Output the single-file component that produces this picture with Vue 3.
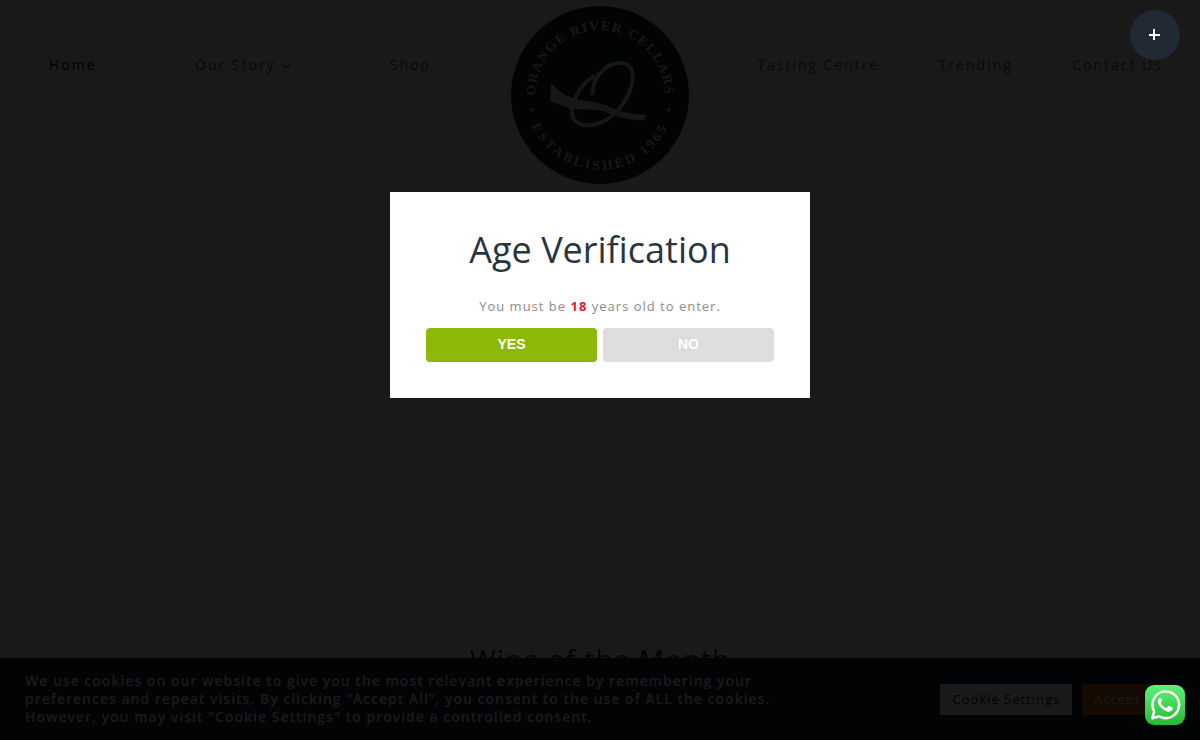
<script setup>
const leftLinks = [
    { label: 'Home', active: true },
    { label: 'Our Story', dropdown: true },
    { label: 'Shop' }
]

const rightLinks = [
    { label: 'Tasting Centre' },
    { label: 'Trending' },
    { label: 'Contact Us' }
]
</script>

<template>
    <div class="page">
        <header class="header">
            <nav class="nav nav--left" aria-label="Main">
                <a
                    v-for="link in leftLinks"
                    :key="link.label"
                    href="#"
                    class="nav__link"
                    :class="{ 'nav__link--active': link.active }"
                >
                    {{ link.label }}
                    <svg v-if="link.dropdown" class="nav__chevron" viewBox="0 0 10 6" aria-hidden="true">
                        <path d="M1 1l4 4 4-4" fill="none" stroke="currentColor" stroke-width="1.2" />
                    </svg>
                </a>
            </nav>

            <a href="#" class="logo" aria-label="Orange River Cellars">
                <svg class="logo__svg" viewBox="33 18 534 534">
                    <defs>
                        <path id="arc-top" d="M106 300V285A194 194 0 0 1 494 285V300" />
                        <path id="arc-bottom" d="M76 285A224 224 0 0 0 524 285" />
                    </defs>
                    <circle cx="300" cy="285" r="267" fill="#141e28" />
                    <g class="logo__text">
                        <text><textPath href="#arc-top" startOffset="50%">ORANGE RIVER CELLARS</textPath></text>
                        <text class="logo__year"><textPath href="#arc-bottom" startOffset="50%">ESTABLISHED 1965</textPath></text>
                    </g>
                    <g class="logo__mark">
                        <circle cx="95" cy="330" r="5" />
                        <circle cx="506" cy="330" r="5" />
                        <path d="M153 250C178 275 200 291 232 299C275 305 300 307 330 321C365 337 400 343 438 345L432 362C390 359 350 351 315 335C285 325 250 331 210 326C188 320 170 308 151 304Z" />
                        <path
                            class="logo__loop"
                            d="M279 285C273 262 288 228 313 207C344 182 384 184 395 210C408 250 380 308 338 346C300 380 238 388 219 354C206 320 236 254 284 227"
                        />
                    </g>
                </svg>
            </a>

            <nav class="nav nav--right" aria-label="Secondary">
                <a v-for="link in rightLinks" :key="link.label" href="#" class="nav__link">{{ link.label }}</a>
            </nav>
        </header>

        <main class="content">
            <h2 class="content__title">Wine of the Month</h2>
        </main>

        <section class="cookies" aria-label="Cookie notice">
            <p class="cookies__text">
                We use cookies on our website to give you the most relevant experience by remembering your
                preferences and repeat visits. By clicking “Accept All”, you consent to the use of ALL the cookies.
                However, you may visit "Cookie Settings" to provide a controlled consent.
            </p>
            <div class="cookies__actions">
                <button type="button" class="cookies__btn">Cookie Settings</button>
                <button type="button" class="cookies__btn cookies__btn--accept">Accept All</button>
            </div>
        </section>

        <div class="overlay">
            <div class="dialog" role="dialog" aria-modal="true" aria-labelledby="age-title">
                <h1 id="age-title" class="dialog__title">Age Verification</h1>
                <p class="dialog__text">You must be <strong>18</strong> years old to enter.</p>
                <div class="dialog__actions">
                    <button type="button" class="dialog__btn dialog__btn--yes">YES</button>
                    <button type="button" class="dialog__btn">NO</button>
                </div>
            </div>
        </div>

        <button type="button" class="toggle" aria-label="Toggle sliding bar">
            <svg class="toggle__icon" viewBox="0 0 11 11" aria-hidden="true">
                <path d="M5 0v11M0 6h11" stroke="#fff" stroke-width="2" />
            </svg>
        </button>

        <a href="#" class="whatsapp" aria-label="WhatsApp">
            <svg class="whatsapp__svg" viewBox="0 0 40 40">
                <defs>
                    <linearGradient id="wa" x1="0" y1="0" x2="0" y2="1">
                        <stop offset="0" stop-color="#5df277" />
                        <stop offset="1" stop-color="#27b832" />
                    </linearGradient>
                </defs>
                <rect width="40" height="40" rx="9" fill="url(#wa)" />
                <path d="M7.300 33.200L9.200 26.300A13.300 13.300 0 1 1 14.200 31.300Z" fill="none" stroke="#fff" stroke-width="2.500" stroke-linejoin="round" />
                <path d="M16.500 13.700c-.4-.8-.7-.8-1.200-.8-1.500 0-2.500 1.600-2.500 3.400 0 4.500 6.700 10.400 11.100 10.400 2.200 0 4-1.600 4-3.400 0-.6-.2-.7-.7-1l-3-1.400c-.5-.2-.8-.1-1.100.3l-1.200 1.500c-.3.400-.6.400-1.100.2-2.300-1-3.900-2.700-5-4.600-.2-.4-.1-.7.200-1l.9-1.200c.2-.3.2-.6.100-.9z" fill="#fff" />
            </svg>
        </a>
    </div>
</template>

<style>
body {
    margin: 0;
    background: #fff;
}
</style>

<style scoped>
.page {
    height: 100vh;
    overflow: hidden;
    display: flex;
    flex-direction: column;
    font-family: "Open Sans", "Noto Sans", sans-serif;
    letter-spacing: 1px;
}
.header {
    display: grid;
    grid-template-columns: 1fr 178px 1fr;
    align-items: start;
    padding-top: 6px;
}
.nav {
    display: flex;
    justify-content: space-between;
    padding-top: 48px;
}
.nav--left {
    padding-right: 80px;
    padding-left: 49px;
}
.nav--right {
    padding-right: 37px;
    padding-left: 68px;
}
.nav__link {
    color: #963c28;
    font-size: 14px;
    line-height: 22px;
    letter-spacing: 2px;
    text-decoration: none;
    white-space: nowrap;
}
.nav__link--active {
    color: #000;
}
.nav__chevron {
    width: 10px;
    height: 6px;
    vertical-align: middle;
}
.logo__svg {
    display: block;
    width: 100%;
}
.logo__text {
    fill: #e6e6e6;
    font-family: "Liberation Serif", serif;
    font-size: 40px;
    font-weight: 700;
    letter-spacing: 5px;
    text-anchor: middle;
}
.logo__year {
    letter-spacing: 9px;
}
.logo__mark {
    fill: #f0dcc8;
}
.logo__loop {
    fill: none;
    stroke: #f0dcc8;
    stroke-width: 12px;
}
.content {
    flex: 1;
    display: flex;
    flex-direction: column;
    justify-content: flex-end;
}
.content__title {
    margin: 0 0 56px;
    color: #1e282d;
    font-size: 28px;
    font-weight: 400;
    line-height: 50px;
    text-align: center;
}
.cookies {
    position: fixed;
    right: 0;
    bottom: 0;
    left: 0;
    display: flex;
    align-items: center;
    justify-content: space-between;
    padding: 14px 25px;
    background: #141e32;
}
.cookies__text {
    max-width: 766px;
    margin: 0;
    color: #fff;
    font-size: 14px;
    font-weight: 600;
    line-height: 18px;
}
.cookies__actions {
    display: flex;
    gap: 10px;
}
.cookies__btn {
    padding: 8px 12px;
    border: 0;
    background: #fff;
    color: #141e28;
    font-family: inherit;
    font-size: 13px;
    line-height: 15px;
    letter-spacing: 1px;
    white-space: nowrap;
}
.cookies__btn--accept {
    background: #d26414;
    color: #fff;
}
.overlay {
    position: fixed;
    inset: 0;
    display: flex;
    flex-direction: column;
    align-items: center;
    padding-top: 192px;
    background: rgba(0, 0, 0, 0.9);
}
.dialog {
    box-sizing: border-box;
    width: 420px;
    max-width: 100%;
    padding: 36px;
    background: #fff;
    text-align: center;
}
.dialog__title {
    margin: 0 0 24px;
    color: #27353f;
    font-size: 36px;
    font-weight: 400;
    line-height: 44px;
    letter-spacing: 0;
}
.dialog__text {
    margin: 0 0 12px;
    color: #8c8c8c;
    font-size: 13px;
    line-height: 20px;
}
.dialog__text strong {
    color: #e3202b;
}
.dialog__actions {
    display: flex;
    gap: 6px;
}
.dialog__btn {
    flex: 1;
    padding: 7px 8px 9px;
    border: 0;
    border-radius: 4px;
    background: #ddd;
    color: #fff;
    font-family: "Liberation Sans", Arial, sans-serif;
    font-size: 14px;
    font-weight: 700;
    line-height: 18px;
}
.dialog__btn--yes {
    background: #8db90a;
}
.toggle {
    position: fixed;
    top: 10px;
    right: 20px;
    display: flex;
    align-items: center;
    justify-content: center;
    width: 50px;
    height: 50px;
    padding: 0 1px 1px 0;
    border: 0;
    border-radius: 50%;
    background: #212934;
}
.toggle__icon {
    width: 11px;
    height: 11px;
}
.whatsapp {
    position: fixed;
    right: 15px;
    bottom: 15px;
}
.whatsapp__svg {
    display: block;
    width: 40px;
    height: 40px;
}
</style>
